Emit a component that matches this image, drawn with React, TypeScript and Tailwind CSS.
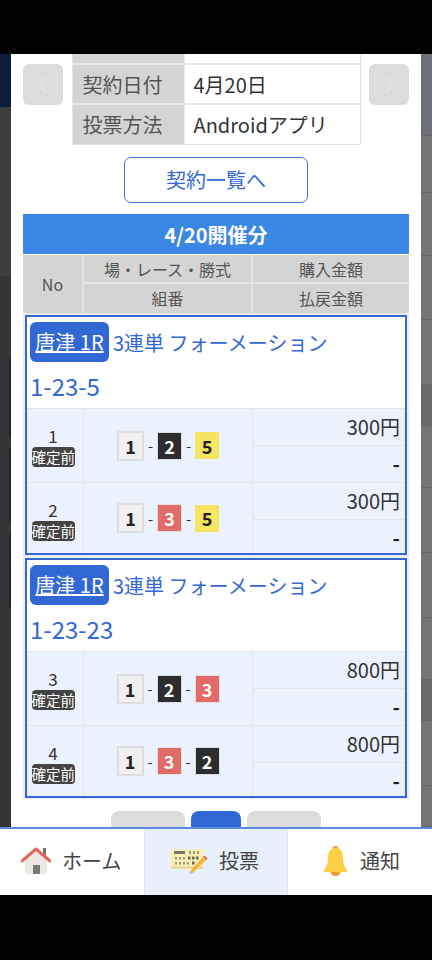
import React from "react";

const FONT = "font-['Noto_Sans_CJK_JP','Noto_Sans',sans-serif]";

const HouseIcon = () => (
  <svg width="30" height="30" viewBox="0 0 30 30" className="shrink-0">
    <rect x="22" y="2" width="3" height="9" fill="#777" />
    <path d="M4 13 L15 4 L26 13 V28 H4 Z" fill="#ece9e4" />
    <path d="M1 15 L15 3 L29 15" fill="none" stroke="#e0685c" strokeWidth="3" strokeLinecap="round" strokeLinejoin="round" />
    <rect x="12" y="19" width="7" height="9" fill="#7b7b7b" />
  </svg>
);

const TicketIcon = () => (
  <svg width="38" height="26" viewBox="0 0 38 26" className="shrink-0">
    <rect x="1" y="1" width="32" height="19" rx="1" fill="#f8eeb4" />
    <rect x="1" y="18" width="32" height="3" fill="#e9dc9c" />
    <rect x="4" y="3" width="11" height="3" fill="#777" />
    <g fill="#a09a7c">
      <rect x="19" y="3" width="2" height="3" /><rect x="23" y="3" width="2" height="3" /><rect x="27" y="3" width="2" height="3" />
      <rect x="5" y="9" width="2" height="2.5" /><rect x="9" y="9" width="2" height="2.5" /><rect x="13" y="9" width="2" height="2.5" />
      <rect x="5" y="14" width="2" height="2.5" /><rect x="9" y="14" width="2" height="2.5" /><rect x="13" y="14" width="2" height="2.5" />
      <rect x="17" y="14" width="2" height="2.5" />
    </g>
    <g fill="#6b6650">
      <rect x="18" y="8.5" width="2.5" height="3" /><rect x="22" y="8.5" width="2.5" height="3" /><rect x="26" y="8.5" width="2.5" height="3" />
      <rect x="22" y="13.5" width="2.5" height="3" />
    </g>
    <path d="M20 23 L33 9 L36 12 L23 25 Z" fill="#f0b93c" />
    <path d="M33 9 L34.5 7.5 L37.5 10.5 L36 12 Z" fill="#e8655a" />
    <path d="M20 23 L19 26 L23 25 Z" fill="#bbb" />
  </svg>
);

const BellIcon = () => (
  <svg width="25" height="30" viewBox="0 0 25 30" className="shrink-0">
    <circle cx="12.5" cy="3" r="3" fill="#ef9a2e" />
    <ellipse cx="12.5" cy="26" rx="5" ry="4" fill="#ef9a2e" />
    <path d="M12.5 2 C6 2 5 8 5 13 C5 18 3 21 1 24 C0.5 25 1 26 2 26 H23 C24 26 24.5 25 24 24 C22 21 20 18 20 13 C20 8 19 2 12.5 2 Z" fill="#fccf47" />
  </svg>
);

const Chevron = ({ right }: { right?: boolean }) => (
  <svg width="12" height="18" viewBox="0 0 12 18" fill="none" stroke="#e6e6e6" strokeWidth="1.5">
    <path d={right ? "M2 1 L10 9 L2 17" : "M10 1 L2 9 L10 17"} />
  </svg>
);

const Ball = ({ n }: { n: number }) => {
  if (n === 1)
    return (
      <span className="w-[27px] h-[30px] bg-[#f1f1f1] border-2 border-[#dedede] text-[#222] flex items-center justify-center text-[18px] font-bold leading-none">
        1
      </span>
    );
  if (n === 2)
    return (
      <span className="w-[25px] h-[28px] bg-[#2d2d2d] border border-[#d8dce4] text-white flex items-center justify-center text-[18px] font-bold leading-none">
        2
      </span>
    );
  if (n === 3)
    return (
      <span className="w-[25px] h-[28px] bg-[#e36b67] border border-[#e6dfe4] text-white flex items-center justify-center text-[18px] font-bold leading-none">
        3
      </span>
    );
  return (
    <span className="w-[24px] h-[27px] bg-[#f6e463] text-[#222] flex items-center justify-center text-[18px] font-bold leading-none">
      5
    </span>
  );
};

const Row = ({ no, balls, amount, h }: { no: number; balls: number[]; amount: string; h: number }) => (
  <div className="flex bg-[#ecf2fd] border-t border-[#e2e4e8]" style={{ height: h }}>
    <div className="w-[57px] shrink-0 flex flex-col items-center pt-[15px] pr-[4px] border-r border-[#e2e4e8]">
      <span className="text-[17px] leading-[24px] text-[#333]">{no}</span>
      <span className="w-[43px] h-[20px] rounded-[4px] bg-[#444] text-white text-[14.5px] leading-[20px] text-center whitespace-nowrap -mt-[1px]">
        確定前
      </span>
    </div>
    <div className="w-[169px] shrink-0 flex items-center justify-center gap-[2px] border-r border-[#e2e4e8]">
      <Ball n={balls[0]} />
      <span className="w-[9px] text-center text-[15px] text-[#333] leading-none">-</span>
      <Ball n={balls[1]} />
      <span className="w-[9px] text-center text-[15px] text-[#333] leading-none">-</span>
      <Ball n={balls[2]} />
    </div>
    <div className="flex-1 flex flex-col">
      <div className="h-[37px] border-b border-[#e2e4e8] text-right pr-[5px] text-[20px] leading-[36px] text-[#333]">{amount}</div>
      <div className="flex-1 text-right pr-[5px] text-[20px] leading-[35px] text-[#222] font-bold">-</div>
    </div>
  </div>
);

const Group = ({ code, rows }: { code: string; rows: { no: number; balls: number[]; amount: string; h: number }[] }) => (
  <div className="border-2 border-[#3268d6] bg-white mb-[3px]">
    <div className="h-[91px] px-[3px] pt-[5px]">
      <div className="flex items-center h-[40px] gap-[4px]">
        <span className="w-[79px] h-[40px] rounded-[6px] bg-[#3268d6] text-white text-[20px] leading-[40px] text-center underline whitespace-nowrap">
          唐津 1R
        </span>
        <span className="text-[#3268d6] text-[20px] whitespace-nowrap pt-[2px]">3連単 フォーメーション</span>
      </div>
      <div className="text-[#3268d6] text-[24px] leading-[36px] mt-[6px]">{code}</div>
    </div>
    {rows.map((r) => (
      <Row key={r.no} {...r} />
    ))}
  </div>
);

const rightSegs = [
  { h: 82, c: "bg-[#6d7077]" },
  { h: 57, c: "bg-[#757575]" },
  { h: 63, c: "bg-[#757575]" },
  { h: 64, c: "bg-[#757575]" },
  { h: 65, c: "bg-[#757575]" },
  { h: 41, c: "bg-[#6a6a6a]" },
  { h: 62, c: "bg-[#757575]" },
  { h: 65, c: "bg-[#757575]" },
  { h: 65, c: "bg-[#757575]" },
  { h: 62, c: "bg-[#757575]" },
  { h: 41, c: "bg-[#6a6a6a]" },
  { h: 65, c: "bg-[#757575]" },
  { h: 41, c: "bg-[#757575]" },
];

export default function App() {
  return (
    <div className={`w-[432px] h-[960px] bg-black flex flex-col overflow-hidden ${FONT}`}>
      <div className="h-[54px] shrink-0" />
      <div className="h-[773px] shrink-0 flex overflow-hidden">
        {/* left backdrop */}
        <div className="w-[11px] shrink-0 flex flex-col">
          <div className="h-[53px] bg-[#0b1c3c]" />
          <div className="h-[169px] bg-[#3d3d3d]" />
          <div className="flex-1 bg-[#353535] flex flex-col items-end">
            <div className="w-[2px] h-[81px] bg-[#1e2438] mt-[81px] rounded-l" />
            <div className="w-[2px] h-[75px] bg-[#1e2438] mt-[10px] rounded-l" />
            <div className="w-[2px] h-[76px] bg-[#1e2438] mt-[9px] rounded-l" />
          </div>
        </div>

        {/* modal */}
        <div className="w-[410px] shrink-0 bg-white px-[12px] overflow-hidden">
          <div className="flex justify-between items-start">
            <div className="w-[40px] h-[41px] mt-[10px] rounded-[6px] bg-[#dcdcdc] flex items-center justify-center">
              <Chevron />
            </div>
            <div className="w-[289px] border-x border-b border-[#e4e4e4] text-[20px] text-[#333]">
              <div className="flex h-[11px] border-b-2 border-[#e8e8e8]">
                <div className="w-[111px] bg-[#d4d4d4]" />
                <div className="flex-1 border-l border-[#e8e8e8]" />
              </div>
              <div className="flex h-[40px] border-b-2 border-[#e8e8e8]">
                <div className="w-[111px] bg-[#d4d4d4] pl-[10px] leading-[40px] text-[#555]">契約日付</div>
                <div className="flex-1 border-l border-[#e8e8e8] pl-[9px] leading-[40px]">4月20日</div>
              </div>
              <div className="flex h-[39px]">
                <div className="w-[111px] bg-[#d4d4d4] pl-[10px] leading-[40px] text-[#555]">投票方法</div>
                <div className="flex-1 border-l border-[#e8e8e8] pl-[9px] leading-[40px]">Androidアプリ</div>
              </div>
            </div>
            <div className="w-[40px] h-[41px] mt-[10px] rounded-[6px] bg-[#dcdcdc] flex items-center justify-center">
              <Chevron right />
            </div>
          </div>

          <div className="flex justify-center mt-[12px]">
            <div className="w-[184px] h-[46px] border-[1.5px] border-[#3e74dc] rounded-[7px] text-[#3268d6] text-[20px] leading-[44px] text-center">
              契約一覧へ
            </div>
          </div>

          <div className="mt-[11px] h-[40px] bg-[#3b87e4] text-white text-[20px] font-bold leading-[42px] text-center">4/20開催分</div>

          <div className="mt-[1px] flex bg-[#d4d4d4] text-[16px] text-[#555] h-[59px] border-b border-[#e6e6e6]">
            <div className="w-[61px] shrink-0 flex items-center justify-center border-r-2 border-[#e4e4e4]">No</div>
            <div className="w-[169px] shrink-0 border-r-2 border-[#e4e4e4] flex flex-col text-center">
              <div className="h-[29px] leading-[28px] border-b-2 border-[#e4e4e4] text-[16px] whitespace-nowrap">場・レース・勝式</div>
              <div className="flex-1 leading-[28px]">組番</div>
            </div>
            <div className="flex-1 flex flex-col text-center">
              <div className="h-[29px] leading-[28px] border-b-2 border-[#e4e4e4]">購入金額</div>
              <div className="flex-1 leading-[28px]">払戻金額</div>
            </div>
          </div>

          <div className="px-[2px] pt-[1px] bg-[#eceef2] pb-[1px]">
            <Group
              code="1-23-5"
              rows={[
                { no: 1, balls: [1, 2, 5], amount: "300円", h: 74 },
                { no: 2, balls: [1, 3, 5], amount: "300円", h: 71 },
              ]}
            />
            <div className="-mb-[3px]">
              <Group
                code="1-23-23"
                rows={[
                  { no: 3, balls: [1, 2, 3], amount: "800円", h: 74 },
                  { no: 4, balls: [1, 3, 2], amount: "800円", h: 71 },
                ]}
              />
            </div>
          </div>

          <div className="flex justify-center gap-[6px] mt-[12px]">
            <div className="w-[74px] h-[24px] rounded-t-[8px] bg-[#dcdcdc]" />
            <div className="w-[50px] h-[24px] rounded-t-[8px] bg-[#3268d6]" />
            <div className="w-[74px] h-[24px] rounded-t-[8px] bg-[#dcdcdc]" />
          </div>
        </div>

        {/* right backdrop */}
        <div className="w-[11px] shrink-0 flex flex-col">
          {rightSegs.map((s, i) => (
            <div key={i} className={`shrink-0 border-b border-[#666] ${s.c}`} style={{ height: s.h }} />
          ))}
        </div>
      </div>

      {/* bottom nav */}
      <div className="h-[68px] shrink-0 bg-white border-t-2 border-[#5b8ade] flex text-[20px] text-[#444]">
        <div className="w-[144px] shrink-0 flex items-center gap-[11px] pl-[21px] pb-[2px]">
          <HouseIcon />
          <span>ホーム</span>
        </div>
        <div className="w-[144px] shrink-0 bg-[#e9f0fc] border-x border-[#dfe3ea] flex items-center gap-[11px] pl-[25px] pb-[2px]">
          <TicketIcon />
          <span>投票</span>
        </div>
        <div className="flex-1 flex items-center gap-[12px] pl-[35px] pb-[2px]">
          <BellIcon />
          <span>通知</span>
        </div>
      </div>
      <div className="flex-1 bg-black" />
    </div>
  );
}
